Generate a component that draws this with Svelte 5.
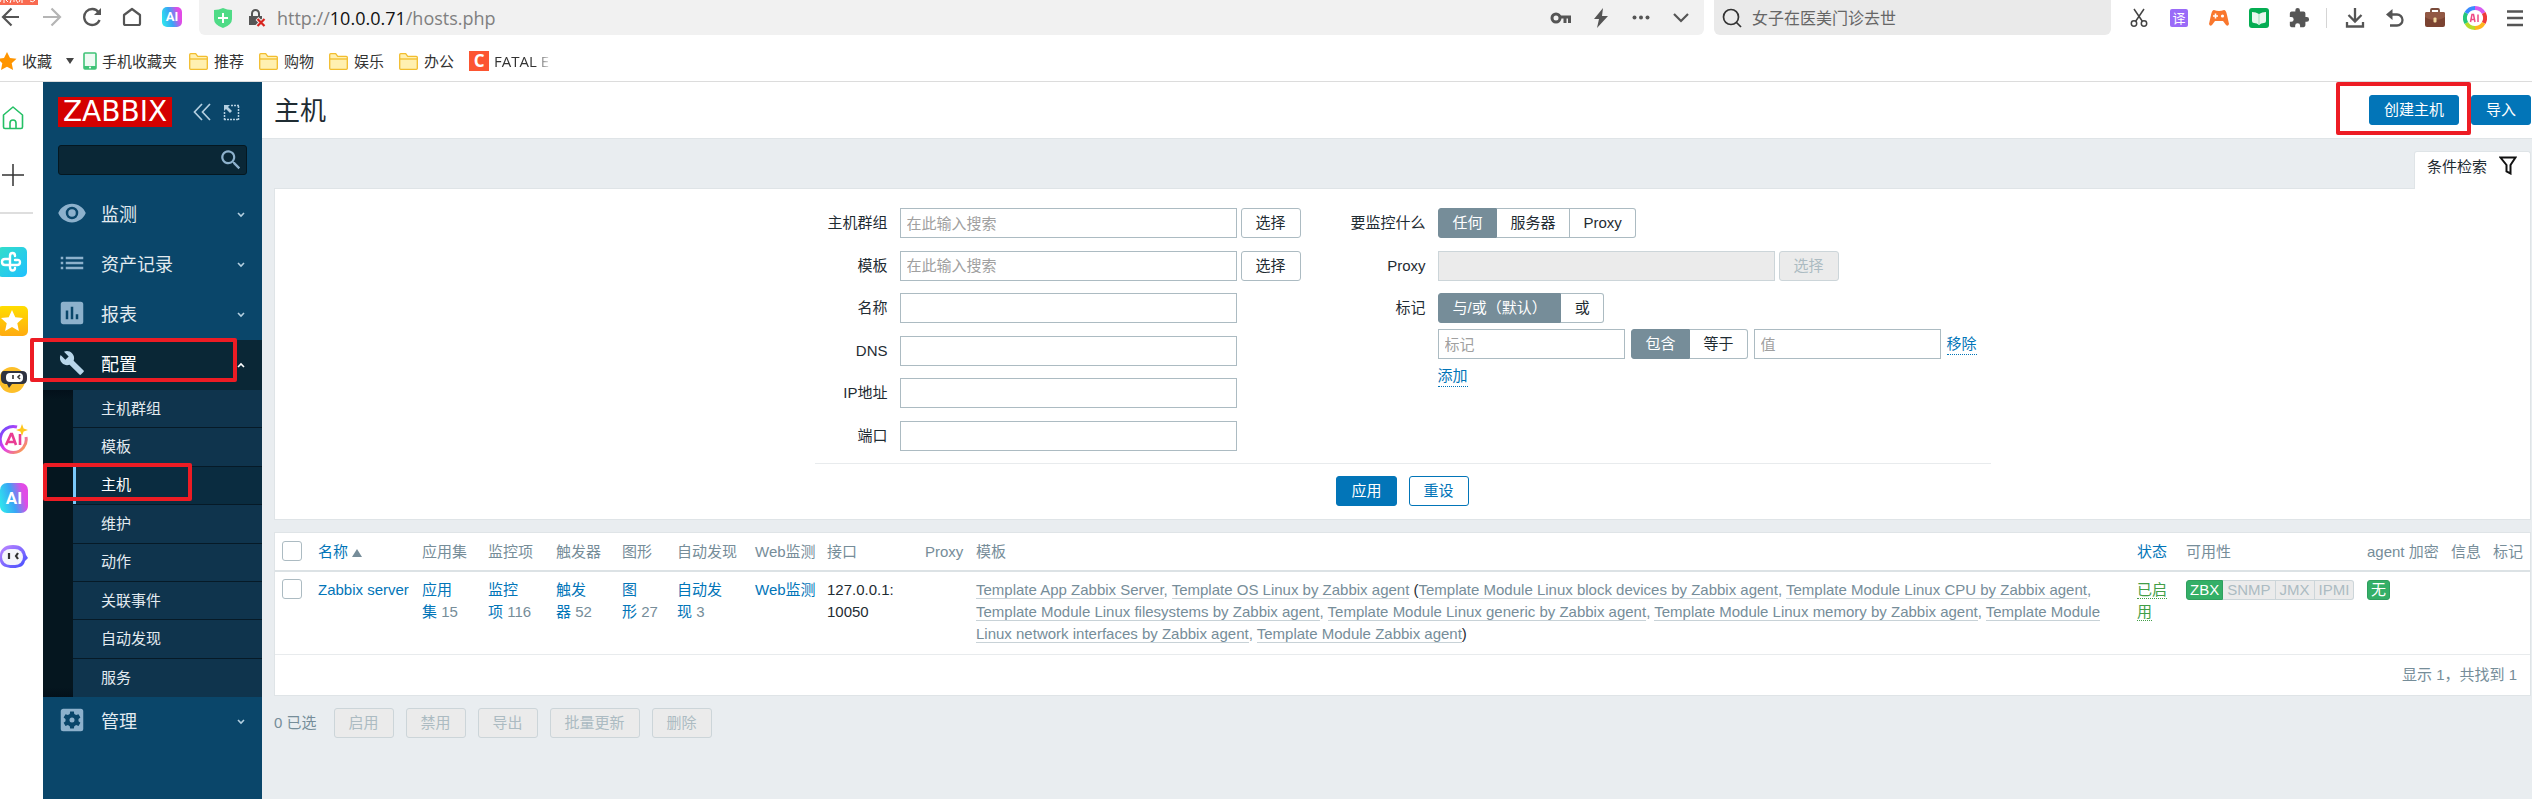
<script>
  const bookmarks = ['推荐', '购物', '娱乐', '办公'];
  const topMenu = [
    { label: '监测', icon: 'eye' },
    { label: '资产记录', icon: 'list' },
    { label: '报表', icon: 'chart' }
  ];
  const subMenu = ['主机群组', '模板', '主机', '维护', '动作', '关联事件', '自动发现', '服务'];
  const leftFields = [
    { id: 'groups', label: '主机群组', placeholder: '在此输入搜索', select: true },
    { id: 'templates', label: '模板', placeholder: '在此输入搜索', select: true },
    { id: 'name', label: '名称' },
    { id: 'dns', label: 'DNS' },
    { id: 'ip', label: 'IP地址' },
    { id: 'port', label: '端口' }
  ];
  const linked = [
    'Template Module Linux block devices by Zabbix agent',
    'Template Module Linux CPU by Zabbix agent',
    'Template Module Linux filesystems by Zabbix agent',
    'Template Module Linux generic by Zabbix agent',
    'Template Module Linux memory by Zabbix agent',
    'Template Module Linux network interfaces by Zabbix agent',
    'Template Module Zabbix agent'
  ];
  const bulk = ['启用', '禁用', '导出', '批量更新', '删除'];
</script>

{#snippet segmented(name, options)}
  <div class="segmented" role="radiogroup" aria-label={name}>
    {#each options as option, i}
      <label><input type="radio" {name} checked={i === 0} /><span>{option}</span></label>
    {/each}
  </div>
{/snippet}

{#snippet menuIcon(kind)}
  <svg class="menu-icon" viewBox="0 0 24 24" fill="currentColor" aria-hidden="true">
    {#if kind === 'eye'}
      <path d="M12 4.5C7 4.5 2.7 7.6 1 12c1.700 4.400 6 7.500 11 7.500s9.300-3.100 11-7.500c-1.700-4.400-6-7.500-11-7.500zM12 17a5 5 0 1 1 0-10 5 5 0 0 1 0 10zm0-8a3 3 0 1 0 0 6 3 3 0 0 0 0-6z" />
    {:else if kind === 'list'}
      <path d="M3 13h2v-2H3v2zm0 4h2v-2H3v2zm0-8h2V7H3v2zm4 4h14v-2H7v2zm0 4h14v-2H7v2zM7 7v2h14V7H7z" />
    {:else if kind === 'chart'}
      <path d="M19 3H5a2 2 0 0 0-2 2v14c0 1.100.9 2 2 2h14a2 2 0 0 0 2-2V5a2 2 0 0 0-2-2zM9 17H7v-7h2v7zm4 0h-2V7h2v10zm4 0h-2v-4h2v4z" />
    {:else if kind === 'wrench'}
      <path d="M22.700 19l-9.100-9.100c.9-2.300.4-5-1.500-6.900-2-2-5-2.400-7.400-1.300L9 6 6 9 1.600 4.700C.4 7.100.9 10.100 2.900 12.100c1.900 1.900 4.600 2.400 6.900 1.500l9.100 9.100c.4.4 1 .4 1.400 0l2.300-2.300c.5-.4.5-1.100.1-1.400z" transform="translate(1.500 1.500) scale(.87)" />
    {:else}
      <path fill-rule="evenodd" d="M5 3h14a2 2 0 0 1 2 2v14a2 2 0 0 1-2 2H5a2 2 0 0 1-2-2V5c0-1.100.9-2 2-2zm5.500 2.200-.3 1.900-1.500.9-1.900-.7-1.500 2.600 1.500 1.200v1.800l-1.500 1.200 1.500 2.600 1.900-.7 1.500.9.3 1.900h3l.3-1.900 1.500-.9 1.900.7 1.500-2.600-1.500-1.200v-1.800l1.500-1.200-1.500-2.600-1.900.7-1.500-.9-.3-1.900h-3zM12 10a2 2 0 1 1 0 4 2 2 0 0 1 0-4z" />
    {/if}
  </svg>
{/snippet}

{#snippet chevron(up)}
  <svg class="chevron" viewBox="0 0 8 6" fill="none" stroke="currentColor" stroke-width="1.600" aria-hidden="true">
    <path d={up ? 'M1 5l3-3 3 3' : 'M1 1l3 3 3-3'} />
  </svg>
{/snippet}

<div class="window">
  <div class="browser">
    <svg class="corner-badge" viewBox="0 0 38 5" aria-hidden="true">
      <path d="M0 0h38v5H0z" fill="#f96a50" />
      <path d="M1 0l-1 2M4 0v3M6 0l2 2M11 0l-1 3M14 0v2M16 0l2 3M20 0l-1 2M22 0v3M30 1q3 2 5-1" stroke="#fff" fill="none" />
    </svg>
    <div class="toolbar">
      <button class="tool first" aria-label="后退">
        <svg width="20" height="20" viewBox="0 0 20 20" fill="none" stroke="#555" stroke-width="2.200"><path d="M18 10H2M10.500 1.500L2 10l8.500 8.500" /></svg>
      </button>
      <button class="tool" aria-label="前进">
        <svg width="20" height="20" viewBox="0 0 20 20" fill="none" stroke="#b5b5b5" stroke-width="2.200"><path d="M1 10h17M9.500 1.500L18 10l-8.500 8.500" /></svg>
      </button>
      <button class="tool" aria-label="刷新">
        <svg width="20" height="20" viewBox="0 0 20 20" fill="none" stroke="#555" stroke-width="2.300"><path d="M16.600 5.200A8 8 0 1 0 17.600 13" /><path d="M19 1v7h-7z" fill="#555" stroke="none" /></svg>
      </button>
      <button class="tool" aria-label="主页">
        <svg width="20" height="20" viewBox="0 0 20 20" fill="none" stroke="#555" stroke-width="2.200" stroke-linejoin="round"><path d="M10 2l8 6v8.500q0 1.500-1.500 1.500h-13Q2 18 2 16.500V8z" /></svg>
      </button>
      <button class="tool" aria-label="助手"><span class="ai-tile small">AI</span></button>
      <div class="address">
        <svg width="20" height="20" viewBox="0 0 20 20"><path d="M1 2q5 0 9-2 4 2 9 2v9q0 6-9 9-9-3-9-9z" fill="#4fdb86" /><path d="M10 5v10M5 10h10" stroke="#fff" stroke-width="2" /></svg>
        <svg width="20" height="20" viewBox="0 0 20 20"><path d="M5 8V5.500a3.500 3.500 0 0 1 7 0V8" fill="none" stroke="#555" stroke-width="2" /><path d="M2 8h13v9H2z" fill="#555" /><path d="M10 10.500l8 8m0-8l-8 8" stroke="#f1f1f1" stroke-width="4" /><path d="M10.500 11l7 7m0-7l-7 7" stroke="#d8241e" stroke-width="2.200" /></svg>
        <span class="url">http://<b>10.0.0.71</b>/hosts.php</span>
        <button class="tool" aria-label="密码">
          <svg width="22" height="20" viewBox="0 0 22 20" fill="none" stroke="#555" stroke-width="3"><circle cx="6" cy="10" r="4" /><path d="M10 9h11M15 9v6M19.500 9v6" /></svg>
        </button>
        <button class="tool" aria-label="加速">
          <svg width="18" height="20" viewBox="0 0 18 20"><path d="M11 0L2 11h5l-2 9 11-12h-6z" fill="#555" /></svg>
        </button>
        <button class="tool" aria-label="更多">
          <svg width="18" height="6" viewBox="0 0 18 6" fill="#555"><circle cx="2.500" cy="2.500" r="2" /><circle cx="9" cy="2.500" r="2" /><circle cx="15.500" cy="2.500" r="2" /></svg>
        </button>
        <button class="tool" aria-label="展开">
          <svg width="18" height="12" viewBox="0 0 18 12" fill="none" stroke="#555" stroke-width="2.200"><path d="M2 2l7 7 7-7" /></svg>
        </button>
      </div>
      <div class="quick-search">
        <svg width="20" height="20" viewBox="0 0 20 20" fill="none" stroke="#333" stroke-width="1.700"><circle cx="9" cy="9" r="7.500" /><path d="M14.500 14.500l4.500 4.500" /></svg>
        <span>女子在医美门诊去世</span>
      </div>
      <div class="extensions">
        <button class="tool" aria-label="截图">
          <svg width="18" height="20" viewBox="0 0 18 20" fill="none" stroke="#444" stroke-width="1.500"><path d="M4 1l8.500 12.500M14 1L5.500 13.500" /><circle cx="4" cy="15.500" r="2.700" /><circle cx="14" cy="15.500" r="2.700" /></svg>
        </button>
        <button class="tool" aria-label="翻译"><span class="translate">译</span></button>
        <button class="tool" aria-label="游戏">
          <svg width="20" height="18" viewBox="0 0 20 18"><path d="M5 1q5 2 10 0 2 0 3 5l2 9q-1 3-3 1l-3-4H6l-3 4q-2 2-3-1L2 6q1-5 3-5z" fill="#f9772e" /><path d="M6.500 4.500v5M4 7h5" stroke="#fff" stroke-width="1.600" /><circle cx="13.500" cy="7" r="1.600" fill="#fff" /></svg>
        </button>
        <button class="tool" aria-label="小说">
          <svg width="20" height="20" viewBox="0 0 20 20"><rect width="20" height="20" rx="3" fill="#04ad52" /><path d="M3 4q4 0 7 2 3-2 7-2v9q0 2-2 2-3 0-5 2-2-2-5-2-2 0-2-2z" fill="#e8f8ee" /><path d="M10 6v10" stroke="#a5dcbc" /></svg>
        </button>
        <button class="tool" aria-label="扩展">
          <svg width="22" height="22" viewBox="0 0 24 24" fill="#555"><path d="M20.500 11H19V7a2 2 0 0 0-2-2h-4V3.500a2.500 2.500 0 0 0-5 0V5H4a2 2 0 0 0-2 2v3.800h1.500a2.700 2.700 0 0 1 0 5.400H2V20c0 1.100.9 2 2 2h3.800v-1.500a2.700 2.700 0 0 1 5.400 0V22H17a2 2 0 0 0 2-2v-4h1.500a2.500 2.500 0 0 0 0-5z" /></svg>
        </button>
        <span class="separator"></span>
        <button class="tool" aria-label="下载">
          <svg width="20" height="20" viewBox="0 0 20 20" fill="none" stroke="#555" stroke-width="2.300"><path d="M10 0v13M3.500 7l6.500 6.500L16.500 7M2 14v4.500h16V14" /></svg>
        </button>
        <button class="tool" aria-label="恢复">
          <svg width="20" height="20" viewBox="0 0 20 20" fill="none" stroke="#555" stroke-width="2.300"><path d="M3 6.500h9a5.500 5.500 0 0 1 0 11H5" /><path d="M7.500 1v11L1 6.500z" fill="#555" stroke="none" /></svg>
        </button>
        <button class="tool" aria-label="工具箱">
          <svg width="20" height="20" viewBox="0 0 20 20"><path d="M6 4V2q0-1 1-1h6q1 0 1 1v2" fill="none" stroke="#7a4b3a" stroke-width="1.800" /><rect y="4" width="20" height="15" rx="2" fill="#7b4331" /><path d="M0 6q0-2 2-2h16q2 0 2 2v3q-4 3-10 3T0 9z" fill="#925844" /><rect x="8.500" y="9.500" width="3" height="5" rx="1" fill="#f3d9a0" /></svg>
        </button>
        <button class="tool" aria-label="智能">
          <svg width="24" height="24" viewBox="0 0 24 24" fill="none" stroke-width="4"><path d="M12 2a10 10 0 0 1 8.700 5" stroke="#d65cf0" /><path d="M20.700 7a10 10 0 0 1 0 10" stroke="#ee3a3a" /><path d="M20.700 17A10 10 0 0 1 12 22" stroke="#ffb51e" /><path d="M12 22a10 10 0 0 1-8.700-5" stroke="#b7dc2c" /><path d="M3.300 17a10 10 0 0 1 0-10" stroke="#24c77a" /><path d="M3.300 7A10 10 0 0 1 12 2" stroke="#3a8bff" /><path d="M7.500 16l1.500-7.500h1.500l1.500 7.500M8 13.500h3.500M15 8.500V16" stroke="#ee4a86" stroke-width="1.500" /></svg>
        </button>
        <button class="tool" aria-label="菜单">
          <svg width="16" height="18" viewBox="0 0 16 18" stroke="#555" stroke-width="2.400"><path d="M0 2.500h16M0 9h16M0 16h16" /></svg>
        </button>
      </div>
    </div>
    <div class="bookmarks">
      <svg width="18" height="20" viewBox="0 0 18 20"><path d="M7 1l3 6 6.500.7-4.800 4.600 1.400 6.700L7 15.700 1 19l1.300-6.700L-2.500 7.700 4 7z" fill="#ff9500" /></svg>
      <a class="favourites" href="#favourites">收藏</a>
      <svg class="caret" width="8" height="6" viewBox="0 0 8 6"><path d="M0 0h8L4 6z" fill="#444" /></svg>
      <svg width="14" height="18" viewBox="0 0 14 18"><rect x="1" y="1" width="12" height="16" rx="1" fill="#eefaf3" stroke="#3fc377" stroke-width="1.600" /><path d="M1 14h12v3H1z" fill="#3fc377" /><circle cx="7" cy="15.500" r="1" fill="#fff" /></svg>
      <a class="phone" href="#phone">手机收藏夹</a>
      {#each bookmarks as mark}
        <a class="folder" href="#bookmark">
          <svg width="19" height="17" viewBox="0 0 19 17"><path d="M.7 15.500V1.700q0-1 1-1h5l2 2.600h8.600q1 0 1 1v11.200q0 .8-1 .8H1.700q-1 0-1-.8z" fill="#fff0b0" stroke="#f2bd2e" stroke-width="1.300" /><path d="M1 6h17" stroke="#f2bd2e" stroke-width="1.300" /></svg>
          {mark}
        </a>
      {/each}
      <a class="site" href="#site"><span class="site-icon">C</span><span class="faded">FATAL E</span></a>
    </div>
  </div>

  <div class="body">
    <nav class="rail" aria-label="侧边应用">
      <svg class="r-home" width="22" height="24" viewBox="0 0 22 24" fill="none" stroke="#24c065" stroke-width="1.600" stroke-linejoin="round"><path d="M11 1l9.500 8v12q0 1.500-1.500 1.500H3Q1.500 22.500 1.500 21V9z" /><path d="M8 22v-5a3 3 0 0 1 6 0v5" /></svg>
      <svg class="r-plus" width="22" height="22" viewBox="0 0 22 22" stroke="#333" stroke-width="1.500"><path d="M11 0v22M0 11h22" /></svg>
      <hr />
      <svg class="r-app" viewBox="0 0 28 30"><defs><linearGradient id="cy" x2="1" y2="1"><stop stop-color="#34dfc8" /><stop offset="1" stop-color="#1fc0ff" /></linearGradient></defs><rect x="-3" width="30" height="30" rx="5" fill="url(#cy)" /><path d="M15 9c0-4-5-4-5 0v11c0 5 5 4 5 1M10 12H5c-4 0-4 6 0 6h12c4 0 4-6 0-5h-2" fill="none" stroke="#fff" stroke-width="2.400" stroke-linecap="round" /></svg>
      <svg class="r-app" viewBox="0 0 28 30"><defs><linearGradient id="ye" x2="0" y2="1"><stop stop-color="#ffdd00" /><stop offset="1" stop-color="#ffab10" /></linearGradient></defs><rect x="-3" width="31" height="30" rx="5" fill="url(#ye)" /><path d="M12 4l3.300 7.300 7.700.8-5.700 5.200 1.600 7.700-6.900-4-6.900 4 1.600-7.700L1 12.100l7.700-.8z" fill="#fff" /></svg>
      <svg class="r-app" viewBox="0 0 28 30"><circle cx="12" cy="15" r="13" fill="#fdbf2a" /><path d="M4 6h18q5 0 5 5v3q0 5-5 5H12l-3 4-2-4H5q-4-1-4-5v-3q0-5 3-5z" fill="#2f3340" /><rect x="6" y="8" width="17" height="9" rx="4" fill="#fff" /><path d="M13 10v4M20 10l-2 2 2 2" fill="none" stroke="#333" stroke-width="1.600" /></svg>
      <svg class="r-app" viewBox="0 0 28 30"><defs><linearGradient id="pu" x2="1" y2="1"><stop stop-color="#5a4cff" /><stop offset=".5" stop-color="#e23cf0" /><stop offset="1" stop-color="#ffb22e" /></linearGradient></defs><path d="M17 3A13 13 0 1 0 26 13" fill="none" stroke="url(#pu)" stroke-width="3" /><path d="M22 0l1.600 4.400L28 6l-4.400 1.600L22 12l-1.600-4.400L16 6l4.400-1.600z" fill="#ffc61c" /><path d="M6 21l5-11h1l4 11M8 18h7M20 10v11" fill="none" stroke="#e93c94" stroke-width="2.600" /></svg>
      <span class="ai-tile">AI</span>
      <svg class="r-app" viewBox="0 0 28 30"><defs><linearGradient id="bo" x2="1" y2="1"><stop stop-color="#c98bff" /><stop offset="1" stop-color="#3d4bff" /></linearGradient></defs><path d="M13 3c9 0 12 5 13 10l2 3-3 3c-1 5-5 7-12 7S1 24 0 19l-3-3 3-3C0 8 4 3 13 3z" fill="url(#bo)" /><rect x="2" y="7" width="21" height="16" rx="8" fill="#f4f5fb" /><path d="M9 11v6M18 11l-2 3 2 3" fill="none" stroke="#333" stroke-width="2.200" /></svg>
    </nav>

    <aside class="sidebar">
      <div class="brand">
        <a class="logo" href="#dashboard">ZABBIX</a>
        <button class="plain collapse" aria-label="折叠"><svg width="18" height="18" viewBox="0 0 18 18" fill="none" stroke="#b4cfe0" stroke-width="1.700"><path d="M9 1L1.500 9 9 17M17 1L9.500 9l7.500 8" /></svg></button>
        <button class="plain" aria-label="隐藏"><svg width="17" height="17" viewBox="0 0 17 17" fill="none" stroke="#b4cfe0"><path d="M8 1.500h8M15.500 2v14M1 15.500h14M1.500 8v8" stroke-width="1.500" stroke-dasharray="2 1" /><path d="M1 1h6L5 3l4 4-2 2-4-4-2 2z" fill="#b4cfe0" stroke="none" /></svg></button>
      </div>
      <div class="side-search">
        <input type="text" aria-label="搜索" />
        <svg width="24" height="24" viewBox="0 0 24 24" fill="#8db1cc" aria-hidden="true"><path d="M15.500 14h-.8l-.3-.3A6.500 6.500 0 1 0 13.700 14.400l.3.300v.8l5 5 1.500-1.500-5-5zm-6 0a4.500 4.500 0 1 1 0-9 4.500 4.500 0 0 1 0 9z" transform="translate(-1 -1) scale(1.080)" /></svg>
      </div>
      <ul class="menu">
        {#each topMenu as item}
          <li><a class="entry" href="#menu">{@render menuIcon(item.icon)}<span>{item.label}</span>{@render chevron(false)}</a></li>
        {/each}
        <li class="open">
          <a class="entry" href="#configuration">{@render menuIcon('wrench')}<span>配置</span>{@render chevron(true)}</a>
          <i class="mark mark-section"></i>
          <ul class="submenu">
            {#each subMenu as item}
              <li class:selected={item === '主机'}>
                <a href="#sub">{item}</a>
                {#if item === '主机'}<i class="mark mark-hosts"></i>{/if}
              </li>
            {/each}
          </ul>
        </li>
        <li><a class="entry" href="#admin">{@render menuIcon('gear')}<span>管理</span>{@render chevron(false)}</a></li>
      </ul>
    </aside>

    <main>
      <header>
        <h1>主机</h1>
        <div class="create">
          <button class="btn primary">创建主机</button>
          <i class="mark mark-create"></i>
        </div>
        <button class="btn primary">导入</button>
      </header>

      <div class="content">
        <div class="tab-row">
          <button class="filter-tab">条件检索
            <svg width="18" height="19" viewBox="0 0 18 19" fill="none" stroke="#111" stroke-width="2"><path d="M1.500 1.500h15L11.500 9v8.500l-4-2V9z" /></svg>
          </button>
        </div>
        <form class="filter" onsubmit={(e) => e.preventDefault()}>
          <div class="form-grid">
            <div class="column">
              {#each leftFields as field}
                <div class="row">
                  <label class="caption" for={field.id}>{field.label}</label>
                  <input class="text" id={field.id} type="text" placeholder={field.placeholder} />
                  {#if field.select}<button type="button" class="btn">选择</button>{/if}
                </div>
              {/each}
            </div>
            <div class="column right">
              <div class="row">
                <span class="caption">要监控什么</span>
                {@render segmented('monitored', ['任何', '服务器', 'Proxy'])}
              </div>
              <div class="row">
                <label class="caption" for="proxy">Proxy</label>
                <input class="text" id="proxy" type="text" disabled />
                <button type="button" class="btn" disabled>选择</button>
              </div>
              <div class="row">
                <span class="caption">标记</span>
                <div class="tags">
                  {@render segmented('evaltype', ['与/或（默认）', '或'])}
                  <div class="tag-line">
                    <input class="text tag" type="text" placeholder="标记" aria-label="标记" />
                    {@render segmented('operator', ['包含', '等于'])}
                    <input class="text tag" type="text" placeholder="值" aria-label="值" />
                    <a class="dotted" href="#remove">移除</a>
                  </div>
                  <a class="dotted add" href="#add">添加</a>
                </div>
              </div>
            </div>
          </div>
          <div class="form-actions">
            <button class="btn primary">应用</button>
            <button type="reset" class="btn outline">重设</button>
          </div>
        </form>

        <div class="panel">
          <table>
            <colgroup>
              <col class="c37" /><col class="c104" /><col class="c66" /><col class="c68" /><col class="c66" /><col class="c55" /><col class="c78" /><col class="c72" /><col class="c98" /><col class="c51" /><col /><col class="c49" /><col class="c181" /><col class="c84" /><col class="c42" /><col class="c43" />
            </colgroup>
            <thead>
              <tr>
                <th><input type="checkbox" aria-label="全选" /></th>
                <th><a href="#sort">名称<svg class="sort" width="10" height="8" viewBox="0 0 10 8"><path d="M0 8h10L5 0z" fill="#768d99" /></svg></a></th>
                <th>应用集</th><th>监控项</th><th>触发器</th><th>图形</th><th>自动发现</th><th>Web监测</th><th>接口</th><th>Proxy</th><th>模板</th>
                <th><a href="#status">状态</a></th><th>可用性</th><th>agent 加密</th><th>信息</th><th>标记</th>
              </tr>
            </thead>
            <tbody>
              <tr>
                <td><input type="checkbox" aria-label="Zabbix server" /></td>
                <td class="nowrap"><a href="#host">Zabbix server</a></td>
                <td><a href="#apps">应用<br />集</a> <small>15</small></td>
                <td><a href="#items">监控<br />项</a> <small>116</small></td>
                <td><a href="#triggers">触发<br />器</a> <small>52</small></td>
                <td><a href="#graphs">图<br />形</a> <small>27</small></td>
                <td><a href="#discovery">自动发<br />现</a> <small>3</small></td>
                <td class="nowrap"><a href="#web">Web监测</a></td>
                <td>127.0.0.1:<br />10050</td>
                <td></td>
                <td class="templates"><a href="#t">Template App Zabbix Server</a><small>{', '}</small><a href="#t">Template OS Linux by Zabbix agent</a> ({#each linked as name, i}<a href="#t">{name}</a>{#if i < linked.length - 1}<small>{', '}</small>{/if}{/each})</td>
                <td><a class="enabled" href="#toggle">已启用</a></td>
                <td><span class="status"><b>ZBX</b><span>SNMP</span><span>JMX</span><span>IPMI</span></span></td>
                <td><span class="status"><b class="only">无</b></span></td>
                <td></td>
                <td></td>
              </tr>
            </tbody>
          </table>
          <div class="total">显示 1，共找到 1</div>
        </div>

        <div class="bulk">
          <span>0 已选</span>
          {#each bulk as action}<button class="btn" disabled>{action}</button>{/each}
        </div>
      </div>
    </main>
  </div>
</div>

<style>
  :global(body) { margin: 0; }
  .window { display: flex; flex-direction: column; min-height: 100vh; overflow: hidden; background: #fff; color: #1f2c33; font: 15px/22px "Liberation Sans", "Noto Sans CJK SC", sans-serif; }
  .window *, .window *::before { box-sizing: border-box; }
  a { color: #0275b8; text-decoration: none; }
  button, input { font: inherit; color: inherit; margin: 0; }
  svg { flex: none; display: block; }

  .browser { position: relative; border-bottom: 1px solid #dcdcdc; font-family: "Open Sans", "Noto Sans CJK SC", sans-serif; }
  .corner-badge { position: absolute; left: 0; top: 0; width: 38px; height: 5px; }
  .toolbar { display: flex; height: 35px; }
  .tool { display: flex; align-items: center; justify-content: center; width: 40px; height: 34px; padding: 0; border: 0; background: none; }
  .tool.first { width: 32px; justify-content: flex-start; padding-left: 1px; }
  .ai-tile { display: flex; align-items: center; justify-content: center; width: 28px; height: 30px; border-radius: 7px; background: linear-gradient(75deg, #2fe0ee 10%, #3aa4f5 45%, #e14be6 80%); color: #fff; font: bold 17px/30px Roboto, sans-serif; }
  .ai-tile.small { width: 20px; height: 20px; border-radius: 5px; font-size: 13px; line-height: 20px; }
  .address { display: flex; flex: 1; align-items: center; margin: 0 10px 0 7px; padding: 0 3px 0 14px; border-radius: 0 0 6px 6px; background: #f1f1f1; }
  .address > svg + svg { margin-left: 14px; }
  .url { flex: 1; margin-left: 10px; color: #808080; font-size: 18px; }
  .url b { color: #111; font-weight: 400; }
  .quick-search { display: flex; align-items: center; gap: 10px; width: 397px; padding-left: 8px; border-radius: 0 0 6px 6px; background: #eaeaea; color: #666; font-size: 16px; }
  .extensions { display: flex; align-items: center; width: 421px; padding-left: 8px; }
  .extensions .tool { flex: none; }
  .translate { width: 18px; height: 18px; border-radius: 2px; background: #9a6bf8; color: #fff; font-size: 13px; line-height: 18px; }
  .separator { flex: none; width: 1px; height: 20px; margin: 0 8px 0 7px; background: #d5d5d5; }
  .bookmarks { display: flex; align-items: center; height: 46px; padding-top: 6px; color: #333; }
  .bookmarks a { display: flex; align-items: center; color: #333; }
  .favourites { margin-left: 4px; }
  .caret { margin: 0 9px 0 14px; }
  .phone { margin: 0 12px 0 5px; }
  .folder { gap: 6px; margin-right: 15px; }
  .site { gap: 5px; }
  .site-icon { width: 20px; height: 20px; background: #fc5531; color: #fff; font-weight: 700; font-size: 17px; line-height: 20px; text-align: center; }
  .faded { mask-image: linear-gradient(90deg, #000 75%, transparent 105%); }

  .body { display: flex; flex: 1; }
  .rail { display: flex; flex-direction: column; align-items: flex-start; width: 43px; padding-top: 24px; }
  .r-home { margin-left: 2px; }
  .r-plus { margin: 34px 0 26px 2px; }
  .rail hr { width: 33px; height: 2px; margin: 0 0 33px; border: 0; background: #dedede; }
  .r-app { width: 28px; height: 30px; margin-bottom: 29px; }
  .rail .ai-tile { margin-bottom: 29px; }

  .sidebar { width: 219px; background: #0a466a; }
  .brand { display: flex; align-items: center; padding: 15px 22px 0 15px; }
  .logo { width: 114px; height: 30px; background: #d40000; color: #fff; font: 28px/30px "DejaVu Sans", sans-serif; text-align: center; }
  .plain { padding: 0; border: 0; background: none; }
  .collapse { margin: 0 12px 0 21px; }
  .side-search { position: relative; margin: 18px 15px 15px; }
  .side-search input { display: block; width: 100%; height: 30px; border: 1px solid #041720; border-radius: 3px; background: #0a2736; color: #fff; }
  .side-search svg { position: absolute; right: 4px; top: 3px; }
  .menu, .submenu { margin: 0; padding: 0; list-style: none; }
  .entry { display: flex; align-items: center; height: 50px; padding: 0 17px 0 14px; color: #e3ebf0; font-size: 18px; }
  .entry span { flex: 1; margin-left: 14px; }
  .menu-icon { width: 30px; height: 30px; margin-bottom: 4px; color: #8db1cc; }
  .chevron { width: 8px; height: 6px; color: #b4cfe0; }
  .open { position: relative; }
  .open .entry { background: #0a2736; color: #fff; }
  .open .menu-icon { color: #b8d6ea; }
  .open .chevron { color: #fff; }
  .submenu { display: grid; grid-auto-rows: 1fr; height: 307px; padding-left: 30px; background: linear-gradient(#03101a, #05161f 10px, #05161f 297px, #03101a); }
  .submenu li { position: relative; background: #0f344d; border-bottom: 1px solid #061a27; }
  .submenu li:last-child { border-bottom: 0; }
  .submenu a { display: flex; align-items: center; height: 100%; padding-left: 28px; color: #e3ebf0; }
  .submenu .selected { background: #0a2c40; }
  .submenu .selected a { border-left: 3px solid #79c8fa; padding-left: 25px; color: #fff; }
  .mark { position: absolute; z-index: 2; border: 4px solid #ed1c24; border-radius: 2px; pointer-events: none; }
  .mark-section { left: -13px; top: -2px; width: 207px; height: 44px; }
  .mark-hosts { left: -30px; top: -4px; width: 149px; height: 38px; }
  .mark-create { left: -33px; top: -13px; width: 135px; height: 53px; }

  main { display: flex; flex-direction: column; flex: 1; min-width: 0; background: #e9edf0; }
  header { display: flex; align-items: center; gap: 12px; height: 57px; padding: 0 1px 0 12px; border-bottom: 1px solid #dfe4e7; background: #fff; }
  h1 { flex: 1; margin: 0; padding-top: 2px; font-size: 26px; line-height: 30px; font-weight: 400; }
  .create { position: relative; }
  .btn { flex: none; display: block; height: 30px; padding: 0 14px; border: 1px solid #acbbc2; border-radius: 3px; background: #fff; line-height: 20px; white-space: nowrap; }
  .btn.primary { border-color: #0275b8; background: #0275b8; color: #fff; }
  .btn.outline { border-color: #0275b8; color: #0275b8; }
  .btn:disabled { border-color: #ccd5d9; background: #ebebeb; color: #acbbc2; }
  .content { padding: 12px 1px 0 12px; }
  .tab-row { display: flex; justify-content: flex-end; }
  .filter-tab { position: relative; display: flex; gap: 12px; height: 38px; margin-bottom: -1px; padding: 4px 13px 0 12px; border: 1px solid #dfe4e7; border-bottom: 0; border-radius: 3px 3px 0 0; background: #fff; line-height: 22px; }
  .filter, .panel { border: 1px solid #dfe4e7; background: #fff; }
  .filter { padding: 19px 12px 13px; }
  .form-grid { display: grid; grid-template-columns: 526px 1fr; max-width: 1176px; margin: 0 auto; border-bottom: 1px solid #e8ebed; }
  .column { display: grid; grid-template-rows: repeat(6, 1fr); height: 255px; }
  .row { display: flex; height: 30px; }
  .caption { width: 73px; margin-right: 12px; line-height: 30px; text-align: right; white-space: nowrap; }
  .right .caption { width: 85px; }
  .text { width: 337px; height: 30px; margin-right: 4px; padding: 0 6px; border: 1px solid #acbbc2; border-radius: 0; background: #fff; }
  .text::placeholder { color: #a0a0a0; opacity: 1; }
  .text:disabled { border-color: #ccd5d9; background: #ebebeb; }
  .segmented { display: flex; height: 30px; }
  .segmented label { position: relative; display: flex; }
  .segmented input { position: absolute; opacity: 0; }
  .segmented span { padding: 0 13px 0 14px; border: 1px solid #acbbc2; border-left-width: 0; background: #fff; line-height: 28px; white-space: nowrap; }
  .segmented label:first-child span { border-left-width: 1px; border-radius: 3px 0 0 3px; }
  .segmented label:last-child span { border-radius: 0 3px 3px 0; }
  .segmented input:checked + span { border-color: #768d99; background: #768d99; color: #fff; }
  .tag-line { display: flex; align-items: center; gap: 6px; margin: 6px 0; }
  .text.tag { width: 187px; margin: 0; }
  .dotted { border-bottom: 1px dotted #0275b8; line-height: 20px; }
  .add { display: inline-block; }
  .form-actions { display: flex; justify-content: center; gap: 12px; padding-top: 12px; }

  .panel { margin-top: 12px; }
  table { width: 100%; table-layout: fixed; border-collapse: collapse; }
  th, td { padding: 7px 6px; text-align: left; vertical-align: top; font-weight: 400; }
  th { height: 38px; padding: 8px 6px 6px; border-bottom: 2px solid #dce2e5; color: #768d99; white-space: nowrap; }
  th:first-child, td:first-child { padding-left: 7px; }
  td { height: 83px; border-bottom: 1px solid #e8ebed; }
  .c37 { width: 37px; } .c42 { width: 42px; } .c43 { width: 43px; } .c49 { width: 49px; } .c51 { width: 51px; } .c55 { width: 55px; } .c66 { width: 66px; } .c68 { width: 68px; } .c72 { width: 72px; } .c78 { width: 78px; } .c84 { width: 84px; } .c98 { width: 98px; } .c104 { width: 104px; } .c181 { width: 181px; }
  .nowrap { white-space: nowrap; }
  small { font-size: 15px; color: #768d99; }
  input[type='checkbox'] { display: block; width: 20px; height: 20px; appearance: none; border: 1px solid #acbbc2; border-radius: 3px; background: #fff; }
  .sort { display: inline-block; margin-left: 4px; }
  .templates a { border-bottom: 1px solid #c8d2d7; color: #768d99; }
  .enabled { border-bottom: 1px dotted #429e47; color: #429e47; }
  .status { display: inline-flex; height: 20px; line-height: 18px; color: #acbbc2; }
  .status b { padding: 0 3px; border: 1px solid #2f9f5e; border-radius: 3px 0 0 3px; background: #34af67; color: #fff; font-weight: 400; }
  .status .only { border-radius: 3px; }
  .status span { padding: 0 4px; border: 1px solid #ccd5d9; border-left-width: 0; background: #ebebeb; }
  .status span:last-child { border-radius: 0 3px 3px 0; }
  .total { padding: 9px 13px; color: #768d99; text-align: right; }
  .bulk { display: flex; align-items: center; gap: 12px; margin-top: 12px; color: #768d99; }
  .bulk span { margin-right: 5px; }
</style>
